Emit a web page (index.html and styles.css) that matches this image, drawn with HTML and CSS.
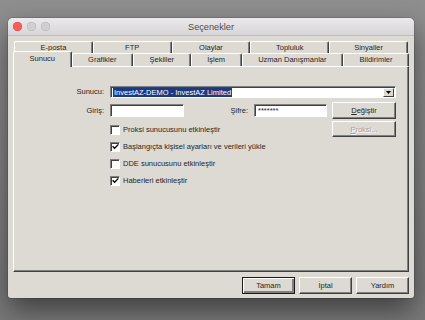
FILE: index.html
```html
<!DOCTYPE html>
<html lang="tr">
<head>
  <meta charset="UTF-8" />
  <title>Seçenekler</title>
  <link rel="stylesheet" href="styles.css">
</head>
<body>
  <div class="window">
    <div class="titlebar">
      <div class="lights">
        <span class="light close"></span>
        <span class="light"></span>
        <span class="light"></span>
      </div>
      <div class="title">Seçenekler</div>
    </div>

    <div class="content">
      <div class="tabrow top">
        <div class="tab">E-posta</div>
        <div class="tab">FTP</div>
        <div class="tab">Olaylar</div>
        <div class="tab">Topluluk</div>
        <div class="tab">Sinyaller</div>
      </div>
      <div class="tabrow">
        <div class="tab active">Sunucu</div>
        <div class="tab">Grafikler</div>
        <div class="tab">Şekiller</div>
        <div class="tab">İşlem</div>
        <div class="tab">Uzman Danışmanlar</div>
        <div class="tab">Bildirimler</div>
      </div>

      <div class="panel">
        <div class="form">
          <label class="lbl">Sunucu:</label>
          <div class="combo">
            <span class="sel">InvestAZ-DEMO - InvestAZ Limited</span>
            <span class="drop">
              <svg width="5" height="3" viewBox="0 0 5 3"><path d="M0 0h5L2.5 3z" fill="#000"/></svg>
            </span>
          </div>

          <label class="lbl">Giriş:</label>
          <div class="field"></div>
          <label class="lbl">Şifre:</label>
          <div class="field pass">*******</div>
          <button class="btn side"><u>D</u>eğiştir</button>

          <div class="check wide3">
            <span class="box"></span>Proksi sunucusunu etkinleştir
          </div>
          <button class="btn side" disabled><u>P</u>roksi...</button>

          <div class="check wide">
            <span class="box">
              <svg width="7" height="7" viewBox="0 0 7 7"><path d="M0.6 3.3L2.6 5.3L6.4 1.4" fill="none" stroke="#000" stroke-width="1.3"/></svg>
            </span>Başlangıçta kişisel ayarları ve verileri yükle
          </div>
          <div class="check wide">
            <span class="box"></span>DDE sunucusunu etkinleştir
          </div>
          <div class="check wide">
            <span class="box">
              <svg width="7" height="7" viewBox="0 0 7 7"><path d="M0.6 3.3L2.6 5.3L6.4 1.4" fill="none" stroke="#000" stroke-width="1.3"/></svg>
            </span>Haberleri etkinleştir
          </div>
        </div>
      </div>

      <div class="footer">
        <button class="btn default">Tamam</button>
        <button class="btn">İptal</button>
        <button class="btn">Yardım</button>
      </div>
    </div>
  </div>
</body>
</html>
```

FILE: styles.css
```css
body {
  margin: 0;
  height: 320px;
  overflow: hidden;
  background: linear-gradient(#8f8f8f, #7a7a7a);
  font-family: "Liberation Sans", Arial, sans-serif;
  font-size: 7.5px;
  color: #262626;
}
.window {
  margin: 18px 0 0 8px;
  width: 406px;
  height: 280px;
  background: #dddad4;
  border-radius: 5px 5px 3px 3px;
  box-shadow: 0 12px 28px rgba(0,0,0,0.5), 0 0 0 1px rgba(0,0,0,0.12);
  display: flex;
  flex-direction: column;
}
.titlebar {
  height: 18px;
  position: relative;
  border-radius: 5px 5px 0 0;
  background: linear-gradient(#ebe9eb, #d7d5d7);
  border-bottom: 1px solid #bdbbbd;
  box-sizing: border-box;
}
.lights {
  position: absolute;
  left: 5px;
  top: 4px;
  display: flex;
  gap: 5px;
}
.light {
  width: 9px;
  height: 9px;
  border-radius: 50%;
  background: #d0cfd0;
  box-shadow: inset 0 0 0 0.5px #b3b2b3;
}
.light.close {
  background: #fc5b57;
  box-shadow: inset 0 0 0 0.5px #dd4540;
}
.title {
  text-align: center;
  line-height: 19px;
  font-size: 9.2px;
  color: #4c4c4c;
}
.content {
  padding: 5px 5px 0 5px;
  display: flex;
  flex-direction: column;
}
.tabrow {
  display: flex;
  height: 13px;
}
.tabrow.top {
  height: 12px;
  margin: 0 1px 0 1px;
}
.tab {
  flex: 1 1 auto;
  box-sizing: border-box;
  border: 1px solid;
  border-color: #fff #404040 transparent #fff;
  border-bottom: none;
  box-shadow: inset -1px 0 #808080;
  border-radius: 2px 2px 0 0;
  text-align: center;
  line-height: 12px;
  white-space: nowrap;
}
.tabrow.top .tab {
  flex: 1 1 0;
  line-height: 11px;
}
.tab.active {
  position: relative;
  z-index: 1;
  margin-top: -2px;
  height: 16px;
  background: #dddad4;
  line-height: 13px;
}
.panel {
  height: 206px;
  box-sizing: border-box;
  border: 1px solid;
  border-color: #fff #404040 #404040 #fff;
  box-shadow: inset -1px -1px #808080;
  padding: 19px 12px 0 1px;
}
.form {
  display: grid;
  grid-template-columns: 95px 74px 1fr 73px 69px;
  grid-template-rows: 16px 19px 17px 17px 17px 17px;
}
.lbl {
  text-align: right;
  padding-right: 6px;
  line-height: 12px;
}
.form .lbl:nth-of-type(n+2) {
  line-height: 17px;
}
.combo {
  grid-column: 2 / 6;
  height: 12px;
  box-sizing: border-box;
  background: #fff;
  border: 1px solid;
  border-color: #808080 #fff #fff #808080;
  box-shadow: inset 1px 1px #404040;
  display: flex;
  align-items: center;
  padding: 1px 1px 1px 2px;
}
.sel {
  background: #1b3a82;
  color: #fff;
  line-height: 9px;
  padding: 0 1px;
}
.drop {
  margin-left: auto;
  width: 11px;
  height: 9px;
  box-sizing: border-box;
  background: #dddad4;
  border: 1px solid;
  border-color: #fff #404040 #404040 #fff;
  display: flex;
  align-items: center;
  justify-content: center;
}
.field {
  margin-top: 2px;
  height: 13px;
  box-sizing: border-box;
  background: #fff;
  border: 1px solid;
  border-color: #808080 #fff #fff #808080;
  box-shadow: inset 1px 1px #404040;
  padding-left: 3px;
  line-height: 11px;
}
.btn {
  font: inherit;
  color: #262626;
  padding: 0;
  width: 53px;
  height: 17px;
  box-sizing: border-box;
  background: #dddad4;
  border: 1px solid;
  border-color: #fff #404040 #404040 #fff;
  box-shadow: inset -1px -1px #808080;
}
.btn.side {
  justify-self: end;
  width: 64px;
  height: 17px;
}
.btn[disabled] {
  height: 16px;
  color: #a4a19c;
  text-shadow: 1px 1px #fff;
}
.btn.default {
  border-color: #1a1a1a;
  box-shadow: inset 1px 1px #fff, inset -2px -2px #808080;
}
.check {
  display: flex;
  align-items: center;
  white-space: nowrap;
}
.wide3 {
  grid-column: 2 / 5;
}
.wide {
  grid-column: 2 / 6;
}
.box {
  width: 10px;
  height: 10px;
  margin-right: 3px;
  box-sizing: border-box;
  background: #fff;
  border: 1px solid;
  border-color: #808080 #fff #fff #808080;
  box-shadow: inset 1px 1px #404040;
  display: flex;
  align-items: center;
  justify-content: center;
}
.footer {
  display: flex;
  justify-content: flex-end;
  gap: 4px;
  margin-top: 5px;
}
```
